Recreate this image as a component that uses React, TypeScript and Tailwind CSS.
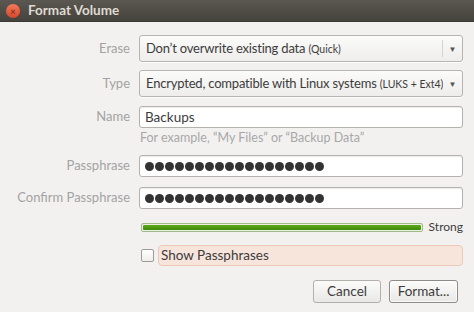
import React from "react";

const font = { fontFamily: 'Lato, "Noto Sans", sans-serif' };

const Label = ({ children }: { children: React.ReactNode }) => (
  <div className="w-[139px] shrink-0 pr-[9px] text-right text-[13px] whitespace-nowrap text-[#a3a3a3]">{children}</div>
);

const Combo = ({ text, small, sep }: { text: string; small: string; sep?: boolean }) => (
  <div className="flex h-[27px] min-w-0 flex-1 items-center rounded-[3px] border border-[#b8b5b0] bg-gradient-to-b from-[#fbfbfa] to-[#eeedeb] shadow-[0_1px_0_rgba(255,255,255,0.8)]">
    <div className="min-w-0 flex-1 overflow-hidden whitespace-nowrap pl-[6px] text-[13px] tracking-[-0.2px] text-[#3c3c3c]">
      {text} <span className="text-[10.5px] tracking-normal">{small}</span>
    </div>
    {sep && <div className="h-[17px] w-px bg-[#d6d4d0]" />}
    <div className="flex h-full w-[19px] shrink-0 items-center justify-center">
      <span className="text-[8px] text-[#555]">▼</span>
    </div>
  </div>
);

const Entry = ({ children }: { children: React.ReactNode }) => (
  <div className="flex h-[22px] flex-1 items-center rounded-[3px] border border-[#b5b2ad] bg-white px-[5px] text-[13.5px] text-[#3c3c3c] shadow-[inset_0_1px_1px_rgba(0,0,0,0.08)]">
    {children}
  </div>
);

const Dots = () => (
  <div className="flex gap-[1px]">
    {Array.from({ length: 18 }).map((_, i) => (
      <span key={i} className="h-[9px] w-[9px] rounded-full bg-[#333]" />
    ))}
  </div>
);

export default function App() {
  return (
    <div className="h-[312px] w-[474px] overflow-hidden bg-[#f2f1f0]" style={font}>
      <div className="flex h-[22px] items-center gap-[8px] bg-gradient-to-b from-[#5b5751] to-[#45433d] px-[6px] border-b border-[#3a3934]">
        <div className="flex h-[14px] w-[14px] items-center justify-center rounded-full bg-gradient-to-b from-[#f37a5a] to-[#d5452a] text-[10px] leading-none text-[#7a2a18]">
          ×
        </div>
        <span className="text-[13.5px] font-bold text-[#dfdbd2]">Format Volume</span>
      </div>
      <div className="flex flex-col pr-[11px] pt-[13px]">
        <div className="flex items-center">
          <Label>Erase</Label>
          <Combo text="Don’t overwrite existing data" small="(Quick)" sep />
        </div>
        <div className="mt-[8px] flex items-center">
          <Label>Type</Label>
          <Combo text="Encrypted, compatible with Linux systems" small="(LUKS + Ext4)" />
        </div>
        <div className="mt-[9px] flex items-start">
          <div className="pt-[1px]">
            <Label>Name</Label>
          </div>
          <div className="flex flex-1 flex-col">
            <Entry>Backups</Entry>
            <div className="mt-[1px] pl-[1px] text-[12.5px] text-[#a8a8a8]">
              For example, “My Files” or “Backup Data”
            </div>
          </div>
        </div>
        <div className="mt-[7px] flex items-center">
          <Label>Passphrase</Label>
          <Entry>
            <Dots />
          </Entry>
        </div>
        <div className="mt-[10px] flex items-center">
          <Label>Confirm Passphrase</Label>
          <Entry>
            <Dots />
          </Entry>
        </div>
        <div className="mt-[9px] flex items-center pl-[141px]">
          <div className="h-[9px] flex-1 rounded-[2px] border border-[#9fb98a] bg-[#eaf0e3] p-[1px]">
            <div className="h-full w-full rounded-[1px] bg-gradient-to-b from-[#5ea818] to-[#3f8a0a]" />
          </div>
          <span className="ml-[6px] text-[12px] text-[#3c3c3c]">Strong</span>
        </div>
        <div className="mt-[9px] flex items-center pl-[141px]">
          <div className="h-[13px] w-[13px] shrink-0 rounded-[2px] border border-[#9e9b96] bg-gradient-to-b from-white to-[#eeeeec]" />
          <div className="ml-[4px] flex h-[21px] flex-1 items-center rounded-[4px] border border-[#ecc9b8] bg-[#f7e5dc] px-[2px] text-[13.5px] text-[#3c3c3c]">
            Show Passphrases
          </div>
        </div>
        <div className="mt-[14px] flex justify-end gap-[8px] pr-[5px]">
          <div className="flex h-[23px] w-[68px] items-center justify-center rounded-[3px] border border-[#b3b0ab] bg-gradient-to-b from-[#fbfbfa] to-[#e9e8e6] text-[13.5px] text-[#3c3c3c]">
            Cancel
          </div>
          <div className="flex h-[23px] w-[69px] items-center justify-center rounded-[3px] border border-[#8e8b86] bg-gradient-to-b from-[#fbfbfa] to-[#e9e8e6] text-[13.5px] text-[#3c3c3c] shadow-[inset_0_0_0_1px_rgba(255,255,255,0.7)]">
            Format...
          </div>
        </div>
      </div>
    </div>
  );
}
